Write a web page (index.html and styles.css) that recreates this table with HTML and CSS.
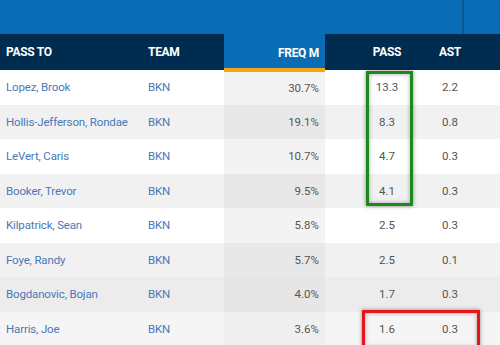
FILE: index.html
```html
<!DOCTYPE html>
<html lang="en">
<head>
  <meta charset="UTF-8" />
  <title>Passes Made</title>
  <link rel="stylesheet" href="styles.css">
</head>
<body>
  <div class="stats">
    <div class="band">
      <div class="band-left"></div>
      <div class="band-right"></div>
    </div>
    <table class="passes">
      <thead>
        <tr>
          <th class="col-name">PASS TO</th>
          <th class="col-team">TEAM</th>
          <th class="col-freq sorted">FREQ M</th>
          <th class="col-pass">PASS</th>
          <th class="col-ast">AST</th>
          <th class="col-rest"></th>
        </tr>
      </thead>
      <tbody>
        <tr><td class="col-name"><a href="#">Lopez, Brook</a></td><td class="col-team"><a href="#">BKN</a></td><td class="col-freq">30.7%</td><td class="col-pass">13.3</td><td class="col-ast">2.2</td><td></td></tr>
        <tr><td class="col-name"><a href="#">Hollis-Jefferson, Rondae</a></td><td class="col-team"><a href="#">BKN</a></td><td class="col-freq">19.1%</td><td class="col-pass">8.3</td><td class="col-ast">0.8</td><td></td></tr>
        <tr><td class="col-name"><a href="#">LeVert, Caris</a></td><td class="col-team"><a href="#">BKN</a></td><td class="col-freq">10.7%</td><td class="col-pass">4.7</td><td class="col-ast">0.3</td><td></td></tr>
        <tr><td class="col-name"><a href="#">Booker, Trevor</a></td><td class="col-team"><a href="#">BKN</a></td><td class="col-freq">9.5%</td><td class="col-pass">4.1</td><td class="col-ast">0.3</td><td></td></tr>
        <tr><td class="col-name"><a href="#">Kilpatrick, Sean</a></td><td class="col-team"><a href="#">BKN</a></td><td class="col-freq">5.8%</td><td class="col-pass">2.5</td><td class="col-ast">0.3</td><td></td></tr>
        <tr><td class="col-name"><a href="#">Foye, Randy</a></td><td class="col-team"><a href="#">BKN</a></td><td class="col-freq">5.7%</td><td class="col-pass">2.5</td><td class="col-ast">0.1</td><td></td></tr>
        <tr class="hover"><td class="col-name"><a href="#">Bogdanovic, Bojan</a></td><td class="col-team"><a href="#">BKN</a></td><td class="col-freq">4.0%</td><td class="col-pass">1.7</td><td class="col-ast">0.3</td><td></td></tr>
        <tr class="light"><td class="col-name"><a href="#">Harris, Joe</a></td><td class="col-team"><a href="#">BKN</a></td><td class="col-freq">3.6%</td><td class="col-pass">1.6</td><td class="col-ast">0.3</td><td></td></tr>
      </tbody>
    </table>
    <div class="mark mark-green"></div>
    <div class="mark mark-red"></div>
  </div>
</body>
</html>
```

FILE: styles.css
```css
* {
  margin: 0;
  padding: 0;
  box-sizing: border-box;
}

body {
  font-family: Roboto, 'Liberation Sans', sans-serif;
  background: #fff;
  width: 500px;
  height: 345px;
  overflow: hidden;
}

.stats {
  position: relative;
  background: #0b6cb6;
}

.band {
  display: flex;
  height: 34px;
}

.band-left {
  width: 464px;
  border-right: 2px solid #0a5796;
}

.band-right {
  flex: 1;
}

.passes {
  width: 500px;
  border-collapse: collapse;
  table-layout: fixed;
  font-size: 11.5px;
}

.passes th {
  height: 36px;
  background: #002c4f;
  color: #fff;
  font-size: 12px;
  font-weight: 700;
  letter-spacing: -0.3px;
  text-align: left;
  padding: 0 6px;
  white-space: nowrap;
}

.passes th.sorted {
  background: #0b6cb6;
  border-bottom: 4px solid #f3a712;
  padding-top: 4px;
}

.passes td {
  height: 34.5px;
  padding: 0 6px;
  color: #555;
  background: #fff;
  white-space: nowrap;
}

.passes tbody tr:nth-child(even) td {
  background: #f1f1f1;
}

.passes tbody tr.hover td {
  background: #ececec;
}

.passes tbody tr.light td {
  background: #f5f5f5;
}

.passes a {
  color: #4a78b8;
  text-decoration: none;
  letter-spacing: -0.15px;
}

.col-name { width: 142px; }

.col-team { width: 82px; }

.passes .col-freq {
  width: 101px;
  text-align: right;
}

.passes td.col-freq { background: #f3f3f3; }
.passes tbody tr:nth-child(even) td.col-freq { background: #e8e8e8; }
.passes tbody tr.hover td.col-freq { background: #e6e6e6; }
.passes tbody tr.light td.col-freq { background: #efefef; }

.passes .col-pass {
  width: 100px;
  text-align: center;
  padding-left: 30px;
}

.passes .col-ast {
  width: 50px;
  text-align: center;
}

.mark {
  position: absolute;
  box-shadow: 0 0 4px rgba(0, 0, 0, 0.45), inset 0 0 4px rgba(0, 0, 0, 0.35);
}

.mark-green {
  left: 366px;
  top: 71px;
  width: 47px;
  height: 135px;
  border: 3px solid #1b8a1b;
}

.mark-red {
  left: 362px;
  top: 310px;
  width: 118px;
  height: 40px;
  border: 3px solid #e8141b;
}
```
